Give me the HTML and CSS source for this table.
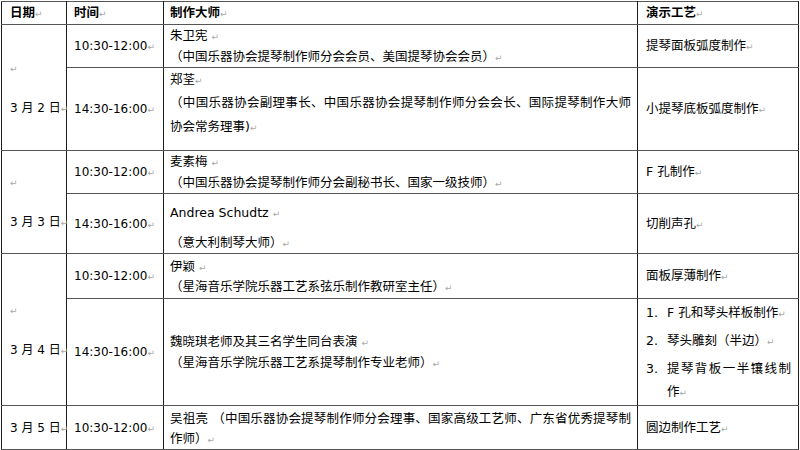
FILE: index.html
```html
<!DOCTYPE html>
<html lang="zh-CN">
<head>
<meta charset="utf-8">
<title>制作大师演示日程</title>
<link rel="stylesheet" href="styles.css">
</head>
<body>
<table class="sched">
  <colgroup>
    <col class="col-date"><col class="col-time"><col class="col-master"><col class="col-demo">
  </colgroup>
  <thead>
    <tr class="row-h">
      <th class="c1">日期<span class="pm">↵</span></th>
      <th class="c2">时间<span class="pm">↵</span></th>
      <th class="c3">制作大师<span class="pm">↵</span></th>
      <th class="c4">演示工艺<span class="pm">↵</span></th>
    </tr>
  </thead>
  <tbody>
    <tr class="row-1">
      <td class="c1 date" rowspan="2"><p><span class="pm">↵</span></p><p>3 月 2 日<span class="pm">↵</span></p></td>
      <td class="c2 time">10:30-12:00<span class="pm">↵</span></td>
      <td class="c3 m-a"><p>朱卫宪 <span class="pm">↵</span></p><p>（中国乐器协会提琴制作师分会会员、美国提琴协会会员）<span class="pm">↵</span></p></td>
      <td class="c4">提琴面板弧度制作<span class="pm">↵</span></td>
    </tr>
    <tr class="row-2">
      <td class="c2 time">14:30-16:00<span class="pm">↵</span></td>
      <td class="c3 m-b"><p class="l1">郑荃<span class="pm">↵</span></p><p class="l2">（中国乐器协会副理事长、中国乐器协会提琴制作师分会会长、国际提琴制作大师协会常务理事)<span class="pm">↵</span></p></td>
      <td class="c4">小提琴底板弧度制作<span class="pm">↵</span></td>
    </tr>
    <tr class="row-3">
      <td class="c1 date" rowspan="2"><p><span class="pm">↵</span></p><p>3 月 3 日<span class="pm">↵</span></p></td>
      <td class="c2 time">10:30-12:00<span class="pm">↵</span></td>
      <td class="c3 m-c"><p>麦素梅 <span class="pm">↵</span></p><p>（中国乐器协会提琴制作师分会副秘书长、国家一级技师）<span class="pm">↵</span></p></td>
      <td class="c4">F 孔制作<span class="pm">↵</span></td>
    </tr>
    <tr class="row-4">
      <td class="c2 time">14:30-16:00<span class="pm">↵</span></td>
      <td class="c3 m-d"><p>Andrea Schudtz <span class="pm">↵</span></p><p class="gap">（意大利制琴大师）<span class="pm">↵</span></p></td>
      <td class="c4">切削声孔<span class="pm">↵</span></td>
    </tr>
    <tr class="row-5">
      <td class="c1 date" rowspan="2"><p><span class="pm">↵</span></p><p>3 月 4 日<span class="pm">↵</span></p></td>
      <td class="c2 time">10:30-12:00<span class="pm">↵</span></td>
      <td class="c3 m-e"><p>伊颖 <span class="pm">↵</span></p><p>（星海音乐学院乐器工艺系弦乐制作教研室主任）<span class="pm">↵</span></p></td>
      <td class="c4">面板厚薄制作<span class="pm">↵</span></td>
    </tr>
    <tr class="row-6">
      <td class="c2 time">14:30-16:00<span class="pm">↵</span></td>
      <td class="c3 m-f"><p>魏晓琪老师及其三名学生同台表演 <span class="pm">↵</span></p><p>（星海音乐学院乐器工艺系提琴制作专业老师）<span class="pm">↵</span></p></td>
      <td class="c4 demo-list">
        <div class="item"><span class="num">1.</span><span class="txt">F 孔和琴头样板制作<span class="pm">↵</span></span></div>
        <div class="item"><span class="num">2.</span><span class="txt">琴头雕刻（半边）<span class="pm">↵</span></span></div>
        <div class="item"><span class="num">3.</span><span class="txt">提琴背板一半镶线制作<span class="pm">↵</span></span></div>
      </td>
    </tr>
    <tr class="row-7">
      <td class="c1 date"><p>3 月 5 日<span class="pm">↵</span></p></td>
      <td class="c2 time">10:30-12:00<span class="pm">↵</span></td>
      <td class="c3 m-g"><p>吴祖亮 （中国乐器协会提琴制作师分会理事、国家高级工艺师、广东省优秀提琴制作师）<span class="pm">↵</span></p></td>
      <td class="c4">圆边制作工艺<span class="pm">↵</span></td>
    </tr>
  </tbody>
</table>
</body>
</html>
```
FILE: styles.css
```css
html, body {
  margin: 0;
  background: #ffffff;
}
body {
  font-family: "DejaVu Sans", "Noto Sans CJK SC", sans-serif;
  font-size: 12.5px;
  color: #000000;
}
p { margin: 0; }

.sched {
  border-collapse: collapse;
  table-layout: fixed;
  width: 797px;
  margin: 1px 0 0 1px;
}
.col-date { width: 65px; }
.col-time { width: 97px; }
.col-master { width: 474px; }
.col-demo { width: 161px; }

.sched th,
.sched td {
  border-left: 1px solid #1e1e1e;
  border-right: 1px solid #1e1e1e;
  border-top: 1px solid #555555;
  border-bottom: 1px solid #555555;
  vertical-align: middle;
  text-align: left;
  line-height: 22px;
  padding: 0;
}
.sched th { font-weight: bold; }

.c1 { padding: 0 2px 0 8px !important; white-space: nowrap; }
.c2 { padding: 0 4px 0 7px !important; }
.c3 { padding: 0 6px 0 6px !important; text-align: justify !important; }
.c4 { padding: 0 7px 0 8px !important; }

.pm {
  color: #a8a8a8;
  font-family: "DejaVu Sans", sans-serif;
  font-size: 9px;
  font-weight: normal;
  line-height: 0;
}

.row-h { height: 21px; }
.row-1 { height: 43px; }
.row-2 { height: 83px; }
.row-3 { height: 42px; }
.row-4 { height: 59px; }
.row-5 { height: 45px; }
.row-6 { height: 107px; }
.row-7 { height: 42px; }

.date p { line-height: 40px; font-size: 12px; }
.row-7 .date p { line-height: 22px; }

.time { font-size: 12px; white-space: nowrap; }

.m-a p { line-height: 21px; }
.sched td.m-b { vertical-align: top; padding-top: 1px !important; }
.m-b .l1 { line-height: 22px; }
.m-b .l2 { line-height: 24px; }
.m-c p { line-height: 21px; }
.sched td.m-d { vertical-align: top; padding-top: 9px !important; }
.m-d p { line-height: 20px; }
.m-d .gap { margin-top: 10px; }
.sched td.m-e { vertical-align: top; padding-top: 3px !important; }
.m-e p { line-height: 20px; }
.m-f p { line-height: 21px; }
.sched td.m-g { vertical-align: top; padding-top: 3px !important; }
.m-g p { line-height: 20px; }

.demo-list .item {
  display: flex;
  line-height: 23px;
  margin-bottom: 5px;
}
.demo-list .item:last-child { margin-bottom: 0; }
.demo-list .num { width: 21px; flex: none; }
.demo-list .txt { flex: 1; text-align: justify; }
```
